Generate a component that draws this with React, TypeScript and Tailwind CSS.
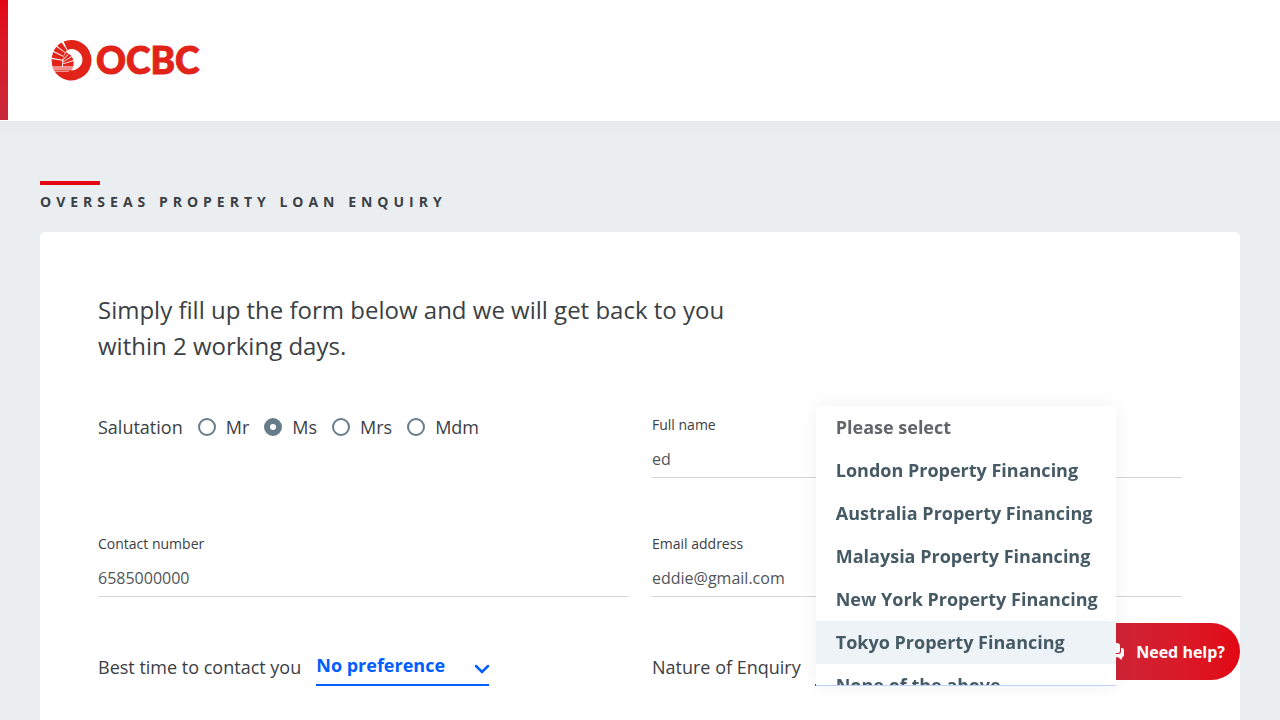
import { useState } from "react";

const salutations = ["Mr", "Ms", "Mrs", "Mdm"];

const enquiries = [
  "Please select",
  "London Property Financing",
  "Australia Property Financing",
  "Malaysia Property Financing",
  "New York Property Financing",
  "Tokyo Property Financing",
  "None of the above",
];

function Logo() {
  return (
    <svg viewBox="0 0 160 44" className="h-11 w-40" role="img" aria-label="OCBC">
      <g fill="#e2231a">
        <path d="M13.6 3.5 A20.2 20.2 0 1 1 4.6 33.6 L18.5 33.6 L20.5 32.2 A10.6 10.6 0 1 0 17.5 12 Z" />
        <path d="M8.6 6.4 L11.6 4.4 L16.8 12 L15.6 14.4 L7.2 8 Z" />
        <path d="M6.2 8.8 L15 14.8 L13.6 18 L3.6 13 Z" />
        <path d="M3.1 14 L13.2 18.8 L12.4 21.8 L1.7 19.8 Z" />
        <path d="M1.5 21 L12.3 22.8 L12 28.4 L2.3 28.4 Z" />
        <path d="M13 19.6 L16.2 14.2 L18.4 15.4 L13.2 21 Z" />
        <path d="M13.4 22 L19 15.8 L21.4 18 L13.4 23.4 Z" />
        <path d="M13.2 24.2 L21.9 18.8 L23.4 22 L13.2 25.6 Z" />
        <path d="M13 26.3 L23.6 22.9 L23.4 28.4 L13 28.4 Z" />
        <path d="M2.5 29.4 H23 L22.4 30.6 H2.9 Z" />
        <path d="M3.4 31.4 H22 L20.4 32.7 H4 Z" />
      </g>
      <text
        x="46"
        y="35.5"
        fill="#e2231a"
        stroke="#e2231a"
        strokeWidth="1"
        className="font-[Lato,sans-serif] text-[37px] font-black"
      >
        OCBC
      </text>
    </svg>
  );
}

function Field({ id, label, type, initial }: { id: string; label: string; type: string; initial: string }) {
  return (
    <div className="flex flex-col">
      <label htmlFor={id} className="text-sm text-[#3b4045]">
        {label}
      </label>
      <input
        id={id}
        type={type}
        defaultValue={initial}
        className="h-[43px] w-full border-b border-[#d3d5d7] pt-1.5 text-base text-[#50555a] outline-none"
      />
    </div>
  );
}

function Chevron() {
  return (
    <svg viewBox="0 0 16 10" className="pointer-events-none absolute -right-px top-[11px] h-2.5 w-4" aria-hidden="true">
      <path d="M2 2 L8 8 L14 2" fill="none" stroke="#005dff" strokeWidth="2.5" strokeLinecap="round" />
    </svg>
  );
}

export default function App() {
  const [salutation, setSalutation] = useState("Ms");
  const [enquiry, setEnquiry] = useState("Please select");
  const [active, setActive] = useState("Tokyo Property Financing");

  return (
    <div className="flex min-h-screen flex-col bg-[#eaeef1] font-['Open_Sans',sans-serif] text-[#3b4045]">
      <header className="flex bg-white pb-px">
        <div className="w-2 bg-linear-to-b from-[#e30613] to-[#c9283a]" />
        <a href="#home" className="px-[42px] py-[38px]">
          <Logo />
        </a>
      </header>

      <main className="flex grow flex-col bg-linear-to-b from-[#e6eaed] to-[#eaeef1] to-[20px] px-10 pt-15">
        <div className="h-1 w-15 bg-[#e30613]" />
        <h1 className="mb-[18px] mt-[5px] text-sm/6 font-bold uppercase tracking-[5px]">Overseas Property Loan Enquiry</h1>

        <form className="grow rounded-t-[5px] bg-white px-[58px] pt-15">
          <p className="max-w-[640px] text-2xl/9">
            Simply fill up the form below and we will get back to you within 2 working days.
          </p>

          <div className="mt-[51px] grid grid-cols-2 gap-x-6 gap-y-14">
            <fieldset className="flex items-start gap-[15px] text-lg/6">
              <legend className="float-left">Salutation</legend>
              {salutations.map((name) => (
                <label key={name} className="flex items-center gap-2.5">
                  <input
                    type="radio"
                    name="salutation"
                    checked={salutation === name}
                    onChange={() => setSalutation(name)}
                    className="size-[18px] appearance-none rounded-full border-2 border-[#667d89] checked:border-6"
                  />
                  {name}
                </label>
              ))}
            </fieldset>
            <Field id="full-name" label="Full name" type="text" initial="ed" />
            <Field id="contact" label="Contact number" type="tel" initial="6585000000" />
            <Field id="email" label="Email address" type="email" initial="eddie@gmail.com" />

            <div className="flex items-start gap-[15px] text-lg/6">
              <label htmlFor="best-time" className="pt-0.5">
                Best time to contact you
              </label>
              <div className="relative w-[173px]">
                <select
                  id="best-time"
                  className="block h-[33px] w-full appearance-none border-b-2 border-[#005dff] pb-[7px] font-bold text-[#005dff] outline-none"
                >
                  <option>No preference</option>
                </select>
                <Chevron />
              </div>
            </div>

            <div className="flex items-start gap-3.5 text-lg/6">
              <label htmlFor="enquiry" className="pt-0.5">
                Nature of Enquiry
              </label>
              <div className="relative w-[301px]">
                <select
                  id="enquiry"
                  value={enquiry}
                  onChange={(e) => setEnquiry(e.target.value)}
                  className="block h-[33px] w-full appearance-none border-b-2 border-[#005dff] pb-[7px] font-bold text-[#005dff] outline-none"
                >
                  {enquiries.map((name) => (
                    <option key={name}>{name}</option>
                  ))}
                </select>
                <ul
                  role="listbox"
                  aria-label="Nature of Enquiry"
                  className="absolute bottom-0 left-px right-0 z-20 h-[280px] overflow-hidden rounded-t-[3px] border-b border-b-[#b9d2ff] bg-white font-bold text-[#455a64] shadow-[0_0_20px_rgba(0,0,0,0.06)]"
                >
                  {enquiries.map((name) => (
                    <li
                      key={name}
                      role="option"
                      aria-selected={enquiry === name}
                      onMouseEnter={() => setActive(name)}
                      onClick={() => setEnquiry(name)}
                      className={`h-[43px] whitespace-nowrap px-5 py-[9px] ${active === name ? "bg-[#eef3f7]" : ""} ${
                        enquiry === name ? "text-[#62666b]" : ""
                      }`}
                    >
                      {name}
                    </li>
                  ))}
                </ul>
              </div>
            </div>
          </div>
        </form>
      </main>

      <button
        type="button"
        className="fixed bottom-10 right-10 z-10 flex h-[57px] items-center gap-3 rounded-full bg-linear-to-r from-[#c8283c] to-[#e30613] pl-6 pr-[15px] text-base font-bold text-white"
      >
        <svg viewBox="0 0 20 18" className="h-[18px] w-5" fill="currentColor" aria-hidden="true">
          <path d="M2 0 H13 Q16 0 16 3 V8 Q16 10 14 10 H6 L2 13 V10 Q0 10 0 8 V2 Q0 0 2 0 Z" />
          <path d="M17 5 H18 Q20 5 20 7 V12 Q20 14 18 14.2 V17 L14 14.2 H8 Q6 14 6 12 V11 H14 Q17 11 17 8.5 Z" />
        </svg>
        Need help?
      </button>
    </div>
  );
}
